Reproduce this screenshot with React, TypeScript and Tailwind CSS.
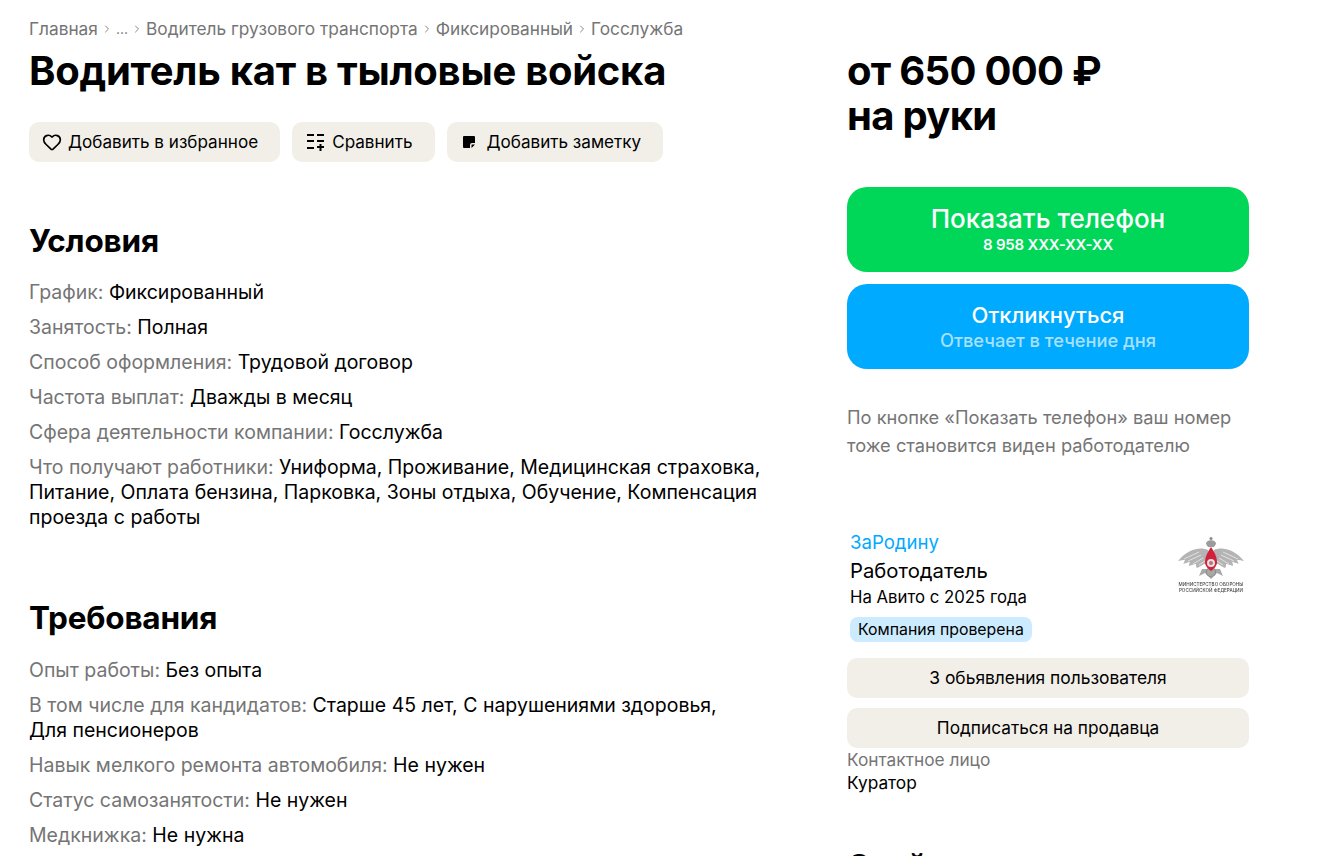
import React from 'react';
import { ChevronRight, Heart } from 'lucide-react';

const FONT = "font-['Inter','Noto_Sans',sans-serif]";

function Row({ label, value }: { label: string; value: string }) {
  return (
    <p className="mb-[10px] text-[19.5px] leading-[25px] text-black">
      <span className="text-[#757575]">{label}: </span>
      {value}
    </p>
  );
}

function ActionButton({ icon, children }: { icon: React.ReactNode; children: React.ReactNode }) {
  return (
    <button className="flex h-10 items-center gap-[6px] rounded-[10px] bg-[#f2efe9] pl-[13px] pr-[22px] text-[17.100px] text-black">
      {icon}
      {children}
    </button>
  );
}

function CompareIcon() {
  return (
    <svg width="20" height="20" viewBox="0 0 20 20" fill="none" stroke="#000" strokeWidth="2" className="ml-px">
      <path d="M1 3h7M11 3h7M1 9h7M11 9h7M1 16h7M11 15h7M14.500 12v7" />
    </svg>
  );
}

function NoteIcon() {
  return (
    <svg width="14" height="14" viewBox="0 0 14 14" className="ml-[2px]">
      <path d="M2 1h10a1 1 0 0 1 1 1v6h-3a2 2 0 0 0-2 2v3H2a1 1 0 0 1-1-1V2a1 1 0 0 1 1-1z" fill="#000" />
      <path d="M13 9.500 9.500 13V10a.5.5 0 0 1 .5-.5z" fill="#000" />
    </svg>
  );
}

const WING = 'M31 14C24 11 12 12 1 25c4-1 5-1 7-1-1 2-1 3-2 4 3-1 5-2 7-2-1 2-1 3-1 4 3-1 5-2 7-2 0 2 0 3 1 4 3-1 5-3 7-4 2 0 4-2 5-5z';

function Emblem() {
  return (
    <div className="mt-[6px] flex w-[70px] flex-col items-center blur-[0.3px]">
      <svg width="68" height="44" viewBox="0 0 68 44">
        <path d={WING} fill="#b4b4b4" />
        <path d={WING} fill="#b4b4b4" transform="matrix(-1 0 0 1 68 0)" />
        <path
          d="M7 23 22 16M11 25 24 19M16 28 26 22M22 29 28 25M61 23 46 16M57 25 44 19M52 28 42 22M46 29 40 25"
          stroke="#ececec"
          strokeWidth="0.8"
          fill="none"
        />
        <path d="M25 33l-3 7 6-3 6 6 6-6 6 3-3-7z" fill="#a8a8a8" />
        <circle cx="34" cy="36" r="4.500" fill="none" stroke="#8f8f8f" strokeWidth="1.200" />
        <path d="M29 8c0-5 10-5 10 0l-2 3h-6z" fill="#9c9c9c" />
        <circle cx="34" cy="2.500" r="1.500" fill="#8a8a8a" />
        <path d="M34 11c2 3 6 9 6 15 0 4-3 7-6 9-3-2-6-5-6-9 0-6 4-12 6-15z" fill="#d0233b" />
        <circle cx="34" cy="27" r="4" fill="#eadfe0" />
        <circle cx="34" cy="27" r="2" fill="#b8737d" />
      </svg>
      <span className="mt-[2px] text-center text-[4.600px] leading-[6px] font-medium whitespace-nowrap text-[#444]">
        МИНИСТЕРСТВО ОБОРОНЫ
        <br />
        РОССИЙСКОЙ ФЕДЕРАЦИИ
      </span>
    </div>
  );
}

function Chevron() {
  return <ChevronRight size={12} strokeWidth={1.750} className="text-[#757575]" />;
}

export default function App() {
  return (
    <div className={`${FONT} flex h-[856px] w-[1323px] overflow-hidden bg-white pl-[29px]`}>
      <main className="w-[818px] shrink-0 pt-[18px]">
        <nav className="flex items-center gap-[3px] text-[17.300px] leading-[22px] text-[#757575]">
          <span>Главная</span>
          <Chevron />
          <span className="text-[14px]">...</span>
          <Chevron />
          <span>Водитель грузового транспорта</span>
          <Chevron />
          <span>Фиксированный</span>
          <Chevron />
          <span>Госслужба</span>
        </nav>
        <h1 className="mt-[6px] text-[40px] leading-[50px] font-bold tracking-[-0.27px] text-black">
          Водитель кат в тыловые войска
        </h1>
        <div className="mt-[26px] flex gap-3">
          <ActionButton icon={<Heart size={20} strokeWidth={2} />}>Добавить в избранное</ActionButton>
          <ActionButton icon={<CompareIcon />}>Сравнить</ActionButton>
          <ActionButton icon={<NoteIcon />}>
            <span className="ml-[5px]">Добавить заметку</span>
          </ActionButton>
        </div>

        <h2 className="mt-[59px] mb-[19px] text-[31.500px] leading-10 font-bold tracking-[-0.2px] text-black">Условия</h2>
        <div className="w-[740px]">
          <Row label="График" value="Фиксированный" />
          <Row label="Занятость" value="Полная" />
          <Row label="Способ оформления" value="Трудовой договор" />
          <Row label="Частота выплат" value="Дважды в месяц" />
          <Row label="Сфера деятельности компании" value="Госслужба" />
          <Row
            label="Что получают работники"
            value="Униформа, Проживание, Медицинская страховка, Питание, Оплата бензина, Парковка, Зоны отдыха, Обучение, Компенсация проезда с работы"
          />
        </div>

        <h2 className="mt-[68px] mb-[20px] text-[31.500px] leading-10 font-bold tracking-[-0.2px] text-black">Требования</h2>
        <div className="w-[700px]">
          <Row label="Опыт работы" value="Без опыта" />
          <Row label="В том числе для кандидатов" value="Старше 45 лет, С нарушениями здоровья, Для пенсионеров" />
          <Row label="Навык мелкого ремонта автомобиля" value="Не нужен" />
          <Row label="Статус самозанятости" value="Не нужен" />
          <Row label="Медкнижка" value="Не нужна" />
        </div>
      </main>

      <aside className="w-[402px] shrink-0 pt-[48px]">
        <p className="text-[40px] leading-[45px] font-bold tracking-[-0.7px] text-black">
          от 650 000 ₽
          <br />
          на руки
        </p>
        <button className="mt-[49px] flex h-[85px] w-full flex-col items-center justify-center rounded-[20px] bg-[#00d759] text-white">
          <span className="text-[26px] leading-[28px] font-medium">Показать телефон</span>
          <span className="mt-[2px] text-[15px] leading-5 font-semibold tracking-[-0.2px]">8 958 XXX-XX-XX</span>
        </button>
        <button className="mt-3 flex h-[85px] w-full flex-col items-center justify-center rounded-[20px] bg-[#00aaff] pb-px text-white">
          <span className="text-[22px] leading-[28px] font-medium">Откликнуться</span>
          <span className="text-[18.250px] leading-[22px] font-medium text-[#a8e0ff]">Отвечает в течение дня</span>
        </button>
        <p className="mt-[34px] text-[18.250px] leading-7 text-[#757575]">
          По кнопке «Показать телефон» ваш номер
          <br />
          тоже становится виден работодателю
        </p>

        <div className="mt-[71px] flex justify-between pl-[3px] pr-[3px]">
          <div>
            <p className="text-[18.600px] leading-[25px] text-[#00aaff]">ЗаРодину</p>
            <p className="mt-[3px] text-[20.300px] leading-[26px] text-black">Работодатель</p>
            <p className="text-[16.750px] leading-[26px] text-black">На Авито с 2025 года</p>
            <span className="mt-[7px] inline-block h-[25px] rounded-[8px] bg-[#cdebff] px-2 text-[15.850px] leading-[25px] text-black">
              Компания проверена
            </span>
          </div>
          <Emblem />
        </div>

        <button className="mt-[16px] h-10 w-full rounded-[10px] bg-[#f2efe9] text-[17.400px] text-black">
          3 обьявления пользователя
        </button>
        <button className="mt-[10px] h-10 w-full rounded-[10px] bg-[#f2efe9] text-[17.250px] text-black">
          Подписаться на продавца
        </button>
        <p className="text-[17.300px] leading-[23px] text-[#757575]">Контактное лицо</p>
        <p className="text-[17.300px] leading-[23px] text-black">Куратор</p>
        <h3 className="mt-[52px] text-[31.500px] leading-10 font-bold tracking-[-0.2px] text-black">Свой</h3>
      </aside>
    </div>
  );
}
